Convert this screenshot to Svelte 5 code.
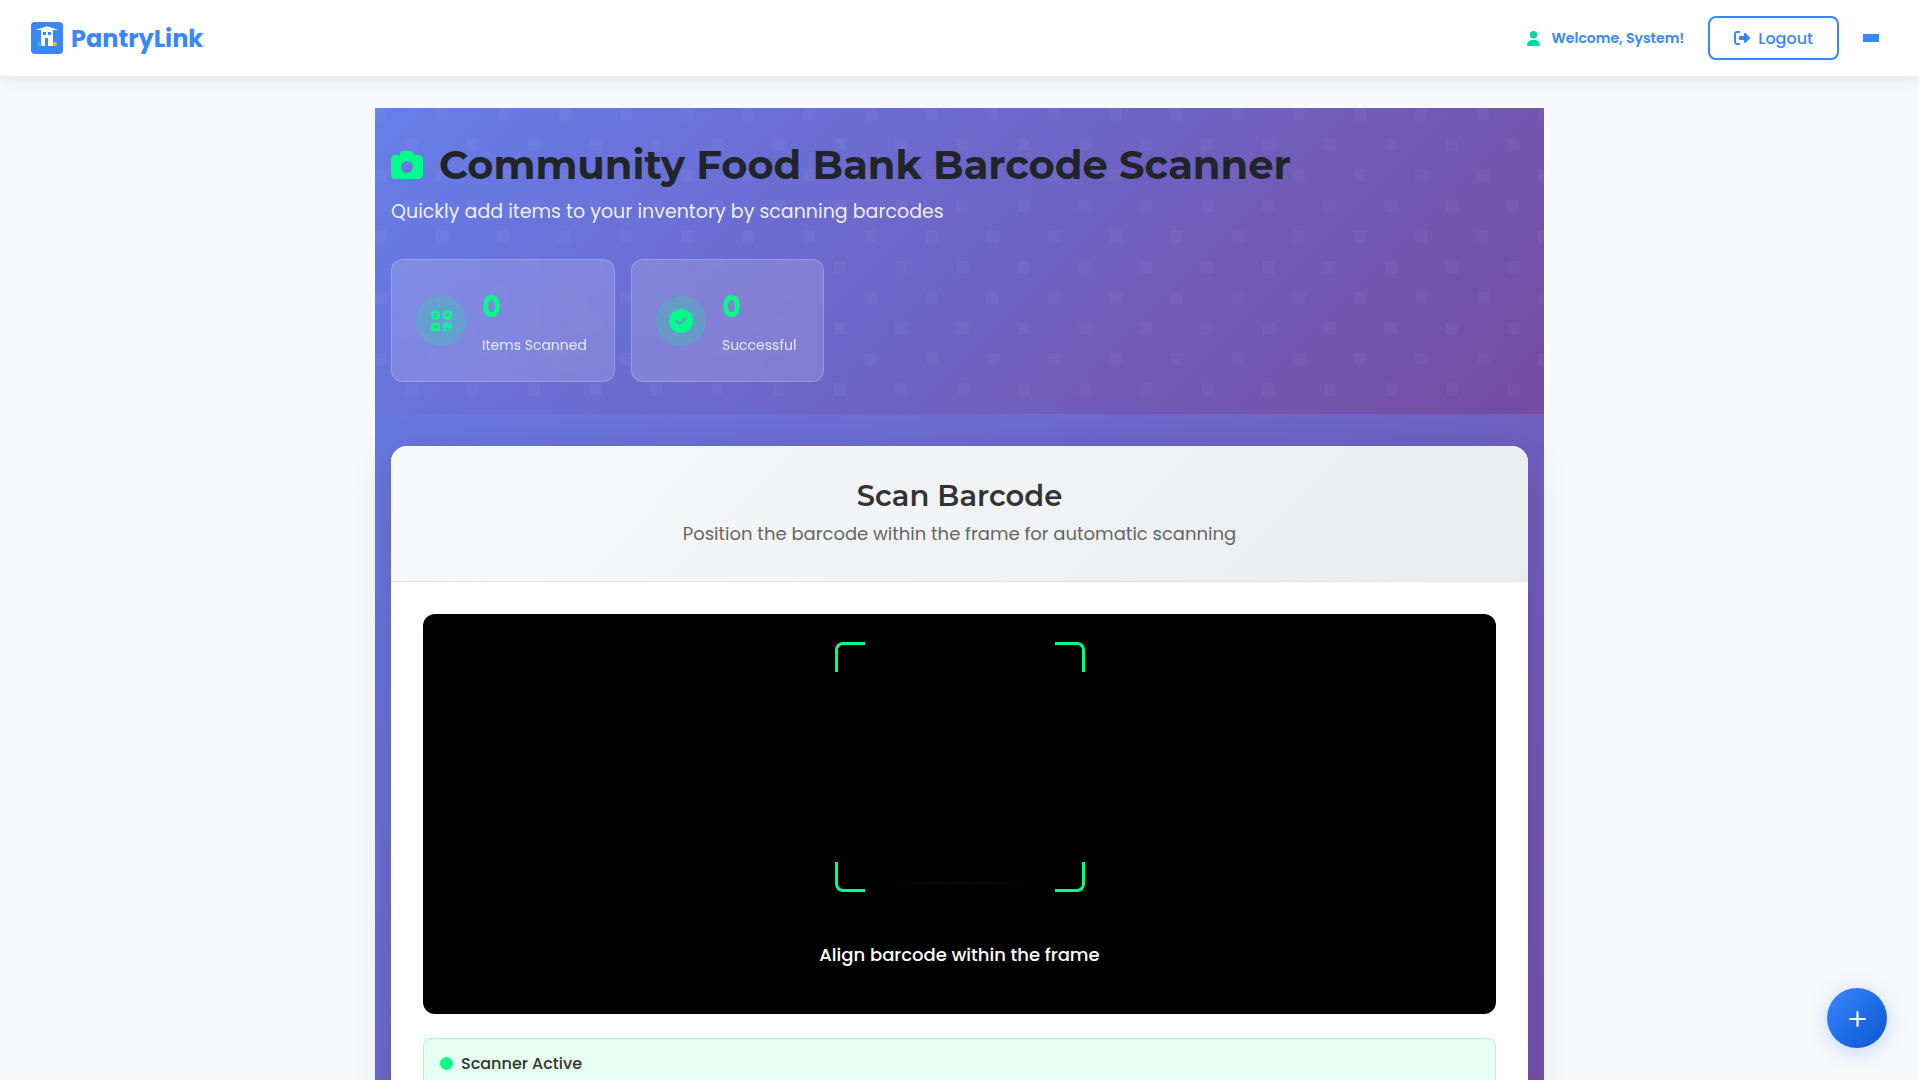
<script>
  const stats = [
    { icon: 'qr', value: 0, label: 'Items Scanned' },
    { icon: 'check', value: 0, label: 'Successful' }
  ];
  const corners = ['tl', 'tr', 'bl', 'br'];
</script>

<header class="navbar">
  <a class="brand" href="/">
    <svg class="brand-mark" viewBox="0 0 32 32" aria-hidden="true">
      <rect width="32" height="32" rx="4" fill="#3a86ff" />
      <path d="M4.500 8 16 4.200 27.500 8z" fill="#fff" />
      <path d="M10 8h12v16h-5v-8h-3v8h-4z" fill="#fff" />
      <path d="M12 10h3v3h-3zM17 10h3v3h-3z" fill="#3a86ff" />
      <circle cx="8" cy="22" r="2" fill="#06d6a0" />
      <circle cx="24" cy="22" r="2" fill="#ffbe0b" />
    </svg>
    <span>PantryLink</span>
  </a>
  <nav class="nav-actions" aria-label="Account">
    <span class="welcome">
      <svg class="user-icon" viewBox="0 0 448 512" aria-hidden="true">
        <path d="M224 256a128 128 0 1 0 0-256 128 128 0 1 0 0 256zm-45.700 48C79.800 304 0 383.800 0 482.300 0 498.700 13.300 512 29.700 512h388.600c16.400 0 29.700-13.300 29.700-29.700C448 383.800 368.200 304 269.700 304h-91.400z" />
      </svg>
      Welcome, System!
    </span>
    <button class="logout" type="button">
      <svg class="logout-icon" viewBox="0 0 512 512" aria-hidden="true">
        <path d="M502.600 278.600c12.500-12.500 12.500-32.800 0-45.300l-128-128c-9.200-9.200-22.900-11.900-34.900-6.900S320 115.100 320 128v64H192c-17.700 0-32 14.300-32 32v64c0 17.700 14.300 32 32 32h128v64c0 12.900 7.800 24.600 19.800 29.600s25.700 2.200 34.900-6.900l128-128zM160 96c17.700 0 32-14.300 32-32s-14.300-32-32-32H96C43 32 0 75 0 128v256c0 53 43 96 96 96h64c17.700 0 32-14.300 32-32s-14.300-32-32-32H96c-17.700 0-32-14.300-32-32V128c0-17.700 14.300-32 32-32h64z" />
      </svg>
      Logout
    </button>
    <button class="menu" type="button" aria-label="Menu"><span></span></button>
  </nav>
</header>

<main class="scanner">
  <section class="hero">
    <svg class="hero-pattern" viewBox="0 0 400 100" preserveAspectRatio="xMinYMin slice" aria-hidden="true">
      <defs>
        <pattern id="dots" width="20" height="20" patternUnits="userSpaceOnUse">
          <path d="M0 0h4v4H0zM10 10h4v4h-4z" fill="#fff" />
        </pattern>
      </defs>
      <rect width="400" height="100" fill="url(#dots)" />
    </svg>
    <div class="hero-content">
      <h1>
        <svg class="camera-icon" viewBox="0 0 512 512" aria-hidden="true">
          <path d="M149.100 64.800 138.700 96H64C28.700 96 0 124.700 0 160v256c0 35.300 28.700 64 64 64h384c35.300 0 64-28.700 64-64V160c0-35.300-28.700-64-64-64h-74.700l-10.400-31.200C356.400 45.200 338.100 32 317.400 32H194.600c-20.700 0-39 13.200-45.500 32.800zM256 192a96 96 0 1 1 0 192 96 96 0 1 1 0-192z" />
        </svg>
        Community Food Bank Barcode Scanner
      </h1>
      <p>Quickly add items to your inventory by scanning barcodes</p>
      <div class="stats">
        {#each stats as stat}
          <div class="stat">
            <span class="stat-icon">
              {#if stat.icon === 'qr'}
                <svg class="qr-icon" viewBox="0 0 448 512" aria-hidden="true">
                  <path fill-rule="evenodd" d="M0 80c0-26.500 21.500-48 48-48h96c26.500 0 48 21.500 48 48v96c0 26.500-21.500 48-48 48H48c-26.500 0-48-21.500-48-48V80zm64 16v64h64V96H64zM0 336c0-26.500 21.500-48 48-48h96c26.500 0 48 21.500 48 48v96c0 26.500-21.500 48-48 48H48c-26.500 0-48-21.500-48-48v-96zm64 16v64h64v-64H64zM304 32h96c26.500 0 48 21.500 48 48v96c0 26.500-21.500 48-48 48h-96c-26.500 0-48-21.500-48-48V80c0-26.500 21.500-48 48-48zm80 64h-64v64h64V96zM256 304c0-8.800 7.200-16 16-16h64c8.800 0 16 7.200 16 16s7.200 16 16 16h32c8.800 0 16-7.200 16-16s7.200-16 16-16 16 7.200 16 16v96c0 8.800-7.200 16-16 16h-64c-8.800 0-16-7.200-16-16s-7.200-16-16-16-16 7.200-16 16v64c0 8.800-7.200 16-16 16h-32c-8.800 0-16-7.200-16-16V304zm112 176a16 16 0 1 1 0-32 16 16 0 1 1 0 32zm64 0a16 16 0 1 1 0-32 16 16 0 1 1 0 32z" />
                </svg>
              {:else}
                <svg class="check-icon" viewBox="0 0 512 512" aria-hidden="true">
                  <path d="M256 512a256 256 0 1 0 0-512 256 256 0 1 0 0 512zm113-303L241 337c-9.400 9.400-24.600 9.400-33.900 0l-64-64c-9.400-9.400-9.400-24.600 0-33.900s24.600-9.400 33.900 0l47 47 111-111c9.400-9.400 24.600-9.400 33.900 0s9.400 24.600 0 33.900z" />
                </svg>
              {/if}
            </span>
            <div class="stat-text">
              <strong>{stat.value}</strong>
              <span>{stat.label}</span>
            </div>
          </div>
        {/each}
      </div>
    </div>
  </section>

  <section class="content">
    <div class="card">
      <div class="card-header">
        <h2>Scan Barcode</h2>
        <p>Position the barcode within the frame for automatic scanning</p>
      </div>
      <div class="card-body">
        <div class="viewport">
          <div class="frame">
            {#each corners as corner}
              <span class="corner {corner}"></span>
            {/each}
            <span class="scan-line"></span>
          </div>
          <p>Align barcode within the frame</p>
        </div>
        <div class="status" role="status">
          <span class="status-dot"></span>
          Scanner Active
        </div>
      </div>
    </div>
  </section>
</main>

<button class="fab" type="button" aria-label="Add item">
  <svg viewBox="0 0 16 16" aria-hidden="true">
    <path d="M8 2v13M1 8.500h14" />
  </svg>
</button>

<style>
  :global(body) {
    background: #f8f9fb;
    color: #212529;
    font-family: Poppins, 'Open Sans', 'Noto Sans', sans-serif;
    font-size: 16px;
    line-height: 25px;
  }

  :global(*) {
    box-sizing: border-box;
  }

  h1,
  h2,
  p {
    margin: 0;
  }

  h1,
  h2 {
    font-family: Montserrat, 'Open Sans', 'Noto Sans', sans-serif;
  }

  button {
    font: inherit;
    cursor: pointer;
  }

  svg {
    display: block;
    flex: none;
    fill: currentColor;
  }

  .navbar {
    position: relative;
    display: flex;
    align-items: center;
    justify-content: space-between;
    padding: 16px 40px 16px 31px;
    background: #fff;
    box-shadow: 0 4px 12px rgba(0, 0, 0, 0.08);
  }

  .brand {
    display: flex;
    align-items: center;
    gap: 8px;
    color: #3a86ff;
    font-size: 24px;
    font-weight: 700;
    line-height: 37px;
    text-decoration: none;
  }

  .brand-mark {
    width: 32px;
    height: 32px;
  }

  .nav-actions {
    display: flex;
    align-items: center;
    gap: 24px;
    color: #3a86ff;
  }

  .welcome {
    display: flex;
    align-items: center;
    gap: 12px;
    font-size: 14px;
    font-weight: 600;
  }

  .user-icon {
    width: 13px;
    height: 15px;
    color: #06d6a0;
  }

  .logout {
    display: flex;
    align-items: center;
    gap: 8px;
    min-height: 44px;
    padding: 0 24px;
    border: 2px solid #3a86ff;
    border-radius: 8px;
    background: #fff;
    box-shadow: 0 2px 4px rgba(0, 0, 0, 0.05);
    color: #3a86ff;
    font-weight: 500;
  }

  .logout-icon {
    width: 16px;
    height: 16px;
  }

  .menu {
    padding: 0;
    border: 0;
    background: none;
  }

  .menu span {
    display: block;
    width: 16px;
    height: 8px;
    background: #3a86ff;
  }

  .scanner {
    max-width: 1169px;
    margin: 32px auto 0;
    background: linear-gradient(135deg, #667eea 0, #764ba2 1768px);
  }

  .hero {
    position: relative;
    padding: 32px 16px;
    overflow: hidden;
    background: linear-gradient(135deg, #667eea 0%, #764ba2 100%);
  }

  .hero-pattern {
    position: absolute;
    inset: 0;
    width: 100%;
    height: 100%;
    opacity: 0.03;
  }

  .hero-content {
    position: relative;
  }

  h1 {
    display: flex;
    align-items: center;
    gap: 16px;
    margin-bottom: 8px;
    font-size: 40px;
    font-weight: 700;
    line-height: 49px;
  }

  .camera-icon {
    width: 32px;
    height: 32px;
    color: #00ff88;
  }

  .hero p {
    color: rgba(255, 255, 255, 0.9);
    font-size: 19px;
    line-height: 30px;
  }

  .stats {
    display: flex;
    flex-wrap: wrap;
    gap: 16px;
    margin-top: 32px;
  }

  .stat {
    display: flex;
    align-items: center;
    gap: 16px;
    padding: 24px 27px 24px 24px;
    border: 1px solid rgba(255, 255, 255, 0.2);
    border-radius: 12px;
    background: rgba(255, 255, 255, 0.15);
    backdrop-filter: blur(10px);
  }

  .stat-icon {
    display: grid;
    place-items: center;
    width: 50px;
    height: 50px;
    border-radius: 50%;
    background: rgba(0, 255, 136, 0.2);
    color: #00ff88;
  }

  .qr-icon,
  .check-icon {
    height: 24px;
  }

  .stat-text {
    display: flex;
    flex-direction: column;
    gap: 4px;
    color: rgba(255, 255, 255, 0.8);
    font-size: 14px;
    line-height: 23px;
  }

  .stat-text strong {
    color: #00ff88;
    font-size: 29px;
    font-weight: 700;
    line-height: 46px;
  }

  .content {
    padding: 32px 16px;
  }

  .card {
    overflow: hidden;
    border-radius: 16px;
    background: #fff;
    box-shadow: 0 10px 40px rgba(0, 0, 0, 0.15);
  }

  .card-header {
    padding: 32px;
    border-bottom: 1px solid #dee2e6;
    background: linear-gradient(135deg, #f8f9fb 0%, #e9ecef 100%);
    text-align: center;
  }

  h2 {
    margin-bottom: 6px;
    color: #333;
    font-size: 29px;
    font-weight: 600;
    line-height: 35px;
  }

  .card-header p {
    color: #666;
    font-size: 18px;
    line-height: 30px;
  }

  .card-body {
    padding: 32px;
  }

  .viewport {
    display: flex;
    flex-direction: column;
    align-items: center;
    gap: 48px;
    height: 400px;
    padding-top: 28px;
    border-radius: 12px;
    background: #000;
    color: #fff;
    font-size: 18px;
    font-weight: 500;
    line-height: 30px;
  }

  .frame {
    position: relative;
    width: 250px;
    height: 250px;
  }

  .corner {
    position: absolute;
    width: 30px;
    height: 30px;
    border: 0 solid #00ff88;
  }

  .tl {
    top: 0;
    left: 0;
    border-width: 3px 0 0 3px;
    border-top-left-radius: 8px;
  }

  .tr {
    top: 0;
    right: 0;
    border-width: 3px 3px 0 0;
    border-top-right-radius: 8px;
  }

  .bl {
    bottom: 0;
    left: 0;
    border-width: 0 0 3px 3px;
    border-bottom-left-radius: 8px;
  }

  .br {
    right: 0;
    bottom: 0;
    border-width: 0 3px 3px 0;
    border-bottom-right-radius: 8px;
  }

  .scan-line {
    position: absolute;
    right: 0;
    bottom: 8px;
    left: 0;
    height: 2px;
    background: linear-gradient(90deg, transparent, #00ff88, transparent);
    opacity: 0.04;
  }

  .status {
    display: flex;
    align-items: center;
    gap: 8px;
    margin-top: 24px;
    padding: 12px 16px;
    border: 1px solid #99ffcf;
    border-radius: 8px;
    background: #e5fff3;
    color: #333;
    font-weight: 500;
  }

  .status-dot {
    width: 13px;
    height: 13px;
    border-radius: 50%;
    background: #00ff88;
  }

  .fab {
    position: fixed;
    right: 32px;
    bottom: 32px;
    display: grid;
    place-items: center;
    width: 60px;
    height: 60px;
    padding: 0;
    border: 0;
    border-radius: 50%;
    background: linear-gradient(135deg, #3a86ff 0%, #0a56d0 100%);
    box-shadow: 0 4px 20px rgba(58, 134, 255, 0.3);
    color: #fff;
  }

  .fab svg {
    width: 17px;
    height: 17px;
    stroke: currentColor;
    stroke-width: 2;
    stroke-linecap: round;
  }
</style>
